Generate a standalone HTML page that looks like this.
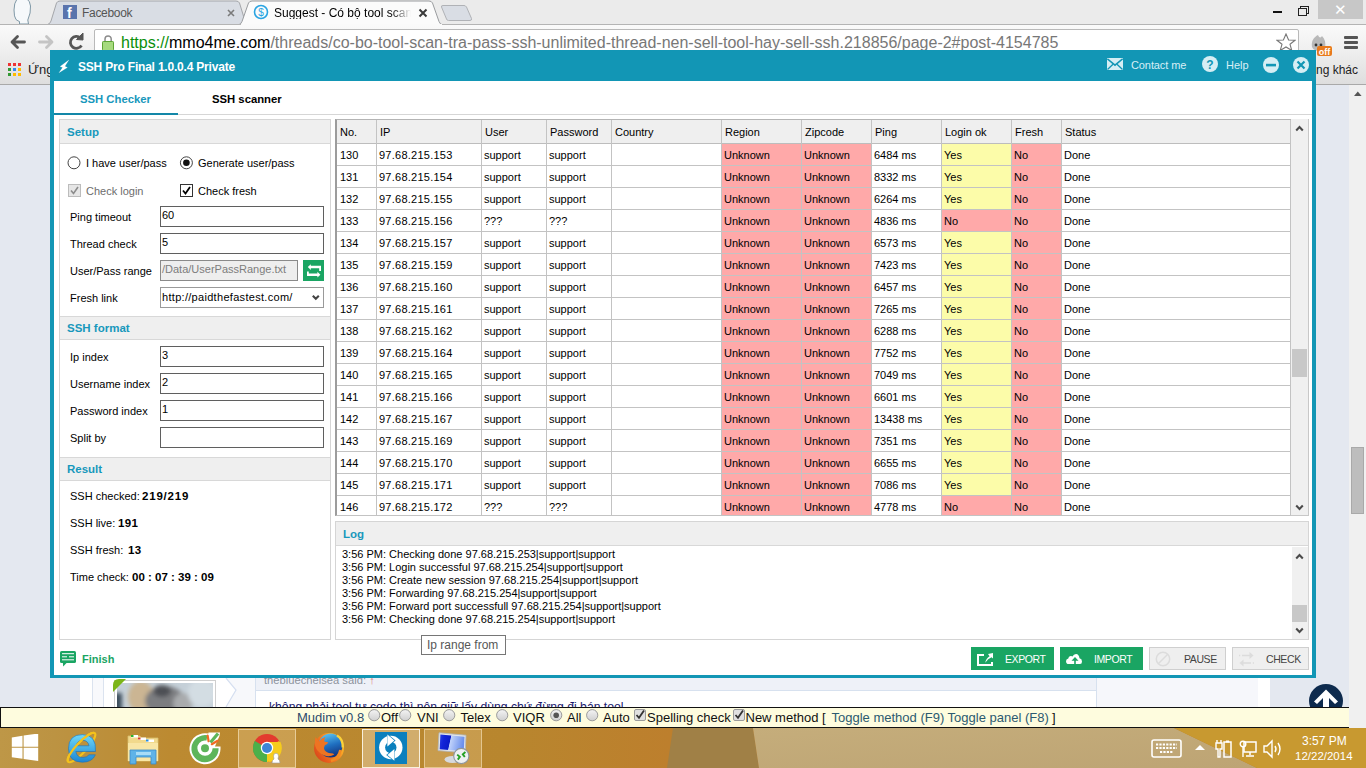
<!DOCTYPE html>
<html><head><meta charset="utf-8"><style>
*{margin:0;padding:0;box-sizing:border-box}
html,body{width:1366px;height:768px;overflow:hidden;position:relative;background:#e4e8f0;font-family:"Liberation Sans",sans-serif;font-size:11px;color:#000}
.a{position:absolute}
.t{position:absolute;white-space:nowrap;line-height:1}
/* chrome */
#tabstrip{left:0;top:0;width:1366px;height:24px;background:#ebebeb}
#toolbar{left:0;top:24px;width:1366px;height:61px;background:linear-gradient(#fafafa,#f0f0f0 40%,#dedede);border-top:1px solid #b4b4b4;border-bottom:1px solid #a9a9a9}
#bookbar{display:none}
#addr{left:94px;top:29px;width:1205px;height:26px;background:#fff;border:1px solid #b9b9b9;border-radius:2px}
/* page */
#pscroll{left:1349px;top:85px;width:17px;height:642px;background:#f0f0f0}
/* app window */
#win{left:50px;top:50px;width:1266px;height:628px;background:#1296b5}
#winin{left:54px;top:81px;width:1258px;height:594px;background:#fff}
.sec{position:absolute;background:#fff;border:1px solid #d5d5d5}
.sech{position:absolute;left:0;top:0;right:0;height:24px;background:#efefef;border-bottom:1px solid #d8d8d8}
.secht{position:absolute;left:7px;top:7px;font-weight:bold;font-size:11.5px;color:#1898bc;line-height:1}
.lbl{position:absolute;white-space:nowrap;line-height:1;font-size:11px}
.inp{position:absolute;background:#fff;border:1px solid #5f5f5f;height:21px}
.inpt{position:absolute;left:1px;top:3px;font-size:11px;line-height:1;white-space:nowrap}
/* table */
#tbl{left:335px;top:119px;width:956px;height:397px;overflow:hidden;border-left:2px solid #9c9c9c;border-top:1px solid #b4b4b4;border-bottom:1px solid #c3c3c3}
.th{position:absolute;background:#efefef;border-bottom:1px solid #bdbdbd}
.tht{position:absolute;top:7px;white-space:nowrap;line-height:1;font-size:11px}
.td{position:absolute;height:22px;border-bottom:1px solid #c3c3c3;padding:6px 0 0 3px;white-space:nowrap;line-height:1;font-size:11px}
.vl{position:absolute;top:0;width:1px;height:400px;background:#c3c3c3}
.btn{position:absolute;height:23px;top:647px}
.btnt{position:absolute;top:7px;font-size:10.5px;line-height:1;white-space:nowrap;letter-spacing:-0.4px}

</style></head><body>
<!-- CHROME FRAME -->
<div class="a" id="tabstrip"></div>
<svg class="a" style="left:0;top:0" width="1366" height="30">
  <path d="M17 -1 Q14 3 14 10 Q14 17 16 19.5 Q18 21 19.5 21.5 L19.5 24 L28.5 24 L27.8 20 Q31 13 30.5 6 Q30 1 27 -1 Z" fill="#f6f9fb" stroke="#7f98a6" stroke-width="1"/>
  <path d="M47.5 24.5 Q50 24 51 21 L56.5 3 Q57.5 1 60 1 L236 1 Q238.5 1 239.5 3 L245 21 Q246 24 248.5 24.5 Z" fill="#d9dde4" stroke="#a4a6aa" stroke-width="1"/>
  <path d="M441.5 7 Q441 5.5 443 5.5 L464 5.5 Q465.5 5.5 466.5 7 L471.5 18.5 Q472 20.5 470 20.5 L448.5 20.5 Q447 20.5 446.5 19 Z" fill="#d9dde4" stroke="#b0b2b6" stroke-width="1"/>
  <path d="M238 25 Q241 24.5 242 21.5 L248.5 3 Q249.5 1 252 1 L429 1 Q431.5 1 432.5 3 L439 21.5 Q440 24.5 443 25 Z" fill="#fbfbfb" stroke="#9a9c9f" stroke-width="1"/>
</svg>
<div class="a" style="left:63px;top:5px;width:14px;height:14px;background:#5a74ad"></div>
<div class="t" style="left:67px;top:6px;font-size:14px;font-weight:bold;color:#fff">f</div>
<div class="t" style="left:82px;top:7px;font-size:12px;color:#555;letter-spacing:-0.3px">Facebook</div>
<svg class="a" style="left:226px;top:8px" width="10" height="10"><path d="M2 2 L8 8 M8 2 L2 8" stroke="#7a7a7a" stroke-width="1.6"/></svg>
<svg class="a" style="left:253px;top:4px" width="16" height="16"><circle cx="8" cy="8" r="6.5" fill="none" stroke="#2aa4e2" stroke-width="1.6"/><text x="8" y="12" font-size="10" text-anchor="middle" fill="#2aa4e2" font-family="Liberation Sans">$</text></svg>
<div class="t" style="left:274px;top:7px;font-size:12px;color:#000;width:137px;overflow:hidden;-webkit-mask-image:linear-gradient(90deg,#000 85%,transparent)">Suggest - Có bộ tool scan, tra</div>
<svg class="a" style="left:418px;top:8px" width="10" height="10"><path d="M1.5 1.5 L8.5 8.5 M8.5 1.5 L1.5 8.5" stroke="#3a3a3a" stroke-width="2"/></svg>
<!-- window controls -->
<div class="a" style="left:1273px;top:11px;width:9px;height:2px;background:#111"></div>
<div class="a" style="left:1300px;top:6px;width:9px;height:8px;border:1.5px solid #222"></div>
<div class="a" style="left:1298px;top:8px;width:9px;height:8px;border:1.5px solid #222;background:#ebebeb"></div>
<div class="a" style="left:1318px;top:0;width:45px;height:19px;background:#c7c7c7"></div>
<div class="t" style="left:1334px;top:2px;font-size:15px;color:#fff">✕</div>

<div class="a" id="toolbar"></div>
<div class="a" style="left:241px;top:24px;width:201px;height:2px;background:#fafafa"></div>
<svg class="a" style="left:0;top:30px" width="95" height="24">
  <path d="M17.5 6.5 L12 12 L17.5 17.5 M12.5 12 L24.5 12" fill="none" stroke="#555" stroke-width="2.8" stroke-linecap="round" stroke-linejoin="round"/>
  <path d="M46.5 6.5 L52 12 L46.5 17.5 M51.5 12 L39.5 12" fill="none" stroke="#c4c4c4" stroke-width="2.8" stroke-linecap="round" stroke-linejoin="round"/>
  <path d="M81.5 15.5 A6 6 0 1 1 80.5 8" fill="none" stroke="#555" stroke-width="2.8"/>
  <path d="M76.5 9.5 L83 3 L83 10 Z" fill="#555" stroke="#555" stroke-width="1" stroke-linejoin="round"/>
</svg>
<div class="a" id="addr"></div>
<svg class="a" style="left:101px;top:34px" width="14" height="17"><path d="M4 7.5 V5 A3.1 3.1 0 0 1 10.2 5 V7.5" fill="none" stroke="#8c8c8c" stroke-width="1.5"/><rect x="1.5" y="7.5" width="11" height="9" rx="0.8" fill="#a6da7e" stroke="#5ea535" stroke-width="1"/></svg>
<div class="t" style="left:121px;top:35px;font-size:16px;color:#777"><span style="color:#0a8f0a">https://</span><span style="color:#000">mmo4me.com</span>/threads/co-bo-tool-scan-tra-pass-ssh-unlimited-thread-nen-sell-tool-hay-sell-ssh.218856/page-2#post-4154785</div>
<svg class="a" style="left:1276px;top:33px" width="20" height="18"><path d="M10 1 L12.6 7 L19 7.3 L14 11.3 L15.8 17.5 L10 14 L4.2 17.5 L6 11.3 L1 7.3 L7.4 7 Z" fill="#fff" stroke="#777" stroke-width="1.1"/></svg>
<svg class="a" style="left:1308px;top:33px" width="28" height="24"><path d="M4 14 C3 8 6 4 10 2 C11 5 13 5 14 3 C17 6 18 10 17 15 C15 19 6 19 4 14 Z" fill="#b9b9b9"/><circle cx="8" cy="12" r="1.4" fill="#333"/><circle cx="13" cy="12" r="1.4" fill="#333"/><rect x="9" y="13" width="15" height="10" rx="2" fill="#e87a1c"/><text x="16.5" y="21.5" font-size="9" font-weight="bold" text-anchor="middle" fill="#fff" font-family="Liberation Sans">off</text></svg>
<div class="a" style="left:1344px;top:36px;width:14px;height:3px;background:#555;border-radius:1px"></div>
<div class="a" style="left:1344px;top:41px;width:14px;height:3px;background:#555;border-radius:1px"></div>
<div class="a" style="left:1344px;top:46px;width:14px;height:3px;background:#555;border-radius:1px"></div>

<div class="a" id="bookbar"></div>
<svg class="a" style="left:8px;top:63px" width="14" height="14">
 <rect x="0" y="0" width="3" height="3" fill="#e33"/><rect x="5" y="0" width="3" height="3" fill="#e33"/><rect x="10" y="0" width="3" height="3" fill="#e33"/>
 <rect x="0" y="5" width="3" height="3" fill="#393"/><rect x="5" y="5" width="3" height="3" fill="#38e"/><rect x="10" y="5" width="3" height="3" fill="#fb0"/>
 <rect x="0" y="10" width="3" height="3" fill="#393"/><rect x="5" y="10" width="3" height="3" fill="#fb0"/><rect x="10" y="10" width="3" height="3" fill="#fb0"/>
</svg>
<div class="t" style="left:28px;top:63px;font-size:13px;color:#222">Ứng</div>
<div class="t" style="left:1316px;top:64px;font-size:12px;color:#222">ng khác</div>

<!-- page -->
<div class="a" id="pscroll"></div>
<svg class="a" style="left:1350px;top:87px" width="16" height="12"><path d="M4 9 L7.8 4.6 L11.6 9 Z" fill="#555"/></svg>
<svg class="a" style="left:1350px;top:713px" width="16" height="12"><path d="M4 4 L7.8 8.4 L11.6 4 Z" fill="#555"/></svg>
<div class="a" style="left:1351px;top:447px;width:13px;height:67px;background:#bdbdbd;border:1px solid #a9a9a9"></div>
<!-- page content below window -->
<div class="a" style="left:80px;top:678px;width:1190px;height:30px;background:#fff"></div>
<div class="a" style="left:92px;top:678px;width:12px;height:30px;background:#f8f9fc;border-left:1px solid #dbe3ef;border-right:1px solid #dbe3ef"></div>
<div class="a" style="left:114px;top:680px;width:102px;height:30px;background:#fff;border:1px solid #cfcfcf"></div>
<svg class="a" style="left:117px;top:683px" width="96" height="25">
<defs><filter id="blr" x="-20%" y="-20%" width="140%" height="140%"><feGaussianBlur stdDeviation="2.2"/></filter></defs>
<rect x="0" y="0" width="96" height="25" fill="#c5d0d8"/>
<g filter="url(#blr)">
<rect x="-4" y="10" width="9" height="20" fill="#3d4d5c"/>
<ellipse cx="24" cy="14" rx="13" ry="16" fill="#cbb593"/>
<ellipse cx="48" cy="18" rx="20" ry="15" fill="#7b7d80"/>
<ellipse cx="45" cy="8" rx="9" ry="6" fill="#4e5055"/>
<ellipse cx="66" cy="20" rx="10" ry="10" fill="#a9abad"/>
<ellipse cx="85" cy="10" rx="14" ry="14" fill="#d3dde3"/>
</g>
</svg>
<svg class="a" style="left:113px;top:679px" width="14" height="14"><path d="M0 13 V6 Q0 0 6 0 H13 Z" fill="#7cb518"/></svg>
<svg class="a" style="left:225px;top:678px" width="31" height="30"><path d="M1 0 L11 12 L1 29 L1 30 L31 30 L31 0 Z" fill="#f7f8fb"/><path d="M1 0 L11 12 L1 29" fill="none" stroke="#d5dff0" stroke-width="1.2"/></svg>
<div class="a" style="left:255px;top:678px;width:842px;height:30px;background:#fff;border-left:1px solid #d7e1ef;border-right:1px solid #d7e1ef"></div>
<div class="a" style="left:256px;top:678px;width:840px;height:13px;background:#eef1f8;border-bottom:1px solid #d7e1ef"></div>
<div class="t" style="left:264px;top:675px;font-size:11.2px;color:#8c929c">thebluechelsea said: <span style="color:#d77">↑</span></div>
<div class="t" style="left:269px;top:701px;font-size:12.2px;color:#1a1a6e">không phải tool tự code thì nên giữ lấy dùng chứ đừng đi bán tool</div>
<div class="a" style="left:1097px;top:678px;width:161px;height:30px;background:#f6f7fb"></div>
<div class="a" style="left:1258px;top:678px;width:12px;height:30px;background:#fff"></div>
<div class="a" style="left:1309px;top:684px;width:34px;height:34px;border-radius:50%;background:#0e2b4e"></div>
<svg class="a" style="left:1309px;top:684px" width="34" height="24"><path d="M17 5.5 L29 17.5 L26 20 L20 14 V24 H14 V14 L8 20 L5 17.5 Z" fill="#fff"/></svg>

<!-- APP WINDOW -->
<div class="a" id="win"></div>
<div class="a" id="winin"></div>
<svg class="a" style="left:54px;top:56px" width="20" height="20"><path d="M14.8 4.1 L10.9 10.3 L13.4 11.5 L5 16.7 L8.6 11.6 L6.1 10.5 Z" fill="#fff" stroke="#fff" stroke-width="0.2"/></svg>
<div class="t" style="left:78px;top:61px;font-size:12px;font-weight:bold;color:#fff;letter-spacing:-0.2px">SSH Pro Final 1.0.0.4 Private</div>
<svg class="a" style="left:1107px;top:58px" width="16" height="13"><rect x="0" y="0" width="16" height="12" fill="#d6eef4"/><path d="M0.3 0.8 L8 7.2 L15.7 0.8" fill="none" stroke="#1296b5" stroke-width="1.6"/><path d="M0.5 11.5 L6 6.3 M15.5 11.5 L10 6.3" stroke="#1296b5" stroke-width="1.3"/></svg>
<div class="t" style="left:1131px;top:60px;font-size:11px;color:#d8eff5;letter-spacing:-0.1px">Contact me</div>
<svg class="a" style="left:1201px;top:55px" width="18" height="18"><circle cx="9" cy="9" r="8" fill="#d6eef4"/><text x="9" y="13.5" font-size="12" font-weight="bold" text-anchor="middle" fill="#1296b5" font-family="Liberation Sans">?</text></svg>
<div class="t" style="left:1226px;top:60px;font-size:11px;color:#d8eff5">Help</div>
<svg class="a" style="left:1262px;top:56px" width="18" height="18"><circle cx="9" cy="9" r="8" fill="#d6eef4"/><rect x="4" y="7.8" width="10" height="2.6" fill="#1296b5"/></svg>
<svg class="a" style="left:1292px;top:56px" width="18" height="18"><circle cx="9" cy="9" r="8" fill="#d6eef4"/><path d="M5.5 5.5 L12.5 12.5 M12.5 5.5 L5.5 12.5" stroke="#1296b5" stroke-width="2.2"/></svg>

<!-- tabs -->
<div class="a" style="left:54px;top:114px;width:1258px;height:1px;background:#d6d6d6"></div>
<div class="a" style="left:54px;top:113px;width:124px;height:2px;background:#1387a8"></div>
<div class="t" style="left:80px;top:94px;font-size:11.3px;font-weight:bold;color:#1898bc">SSH Checker</div>
<div class="t" style="left:212px;top:94px;font-size:11.3px;font-weight:bold;color:#000">SSH scanner</div>

<!-- left panel -->
<div class="sec" style="left:59px;top:119px;width:272px;height:521px"></div>
<div class="a" style="left:60px;top:120px;width:270px;height:24px;background:#efefef;border-bottom:1px solid #d8d8d8"></div>
<div class="t" style="left:67px;top:127px;font-size:11.5px;font-weight:bold;color:#1898bc">Setup</div>
<svg class="a" style="left:67px;top:156px" width="130" height="14"><circle cx="7" cy="6.8" r="6" fill="#fff" stroke="#444" stroke-width="1"/><circle cx="119.4" cy="6.8" r="6" fill="#fff" stroke="#444" stroke-width="1"/><circle cx="119.4" cy="6.8" r="3.3" fill="#111"/></svg>
<div class="lbl" style="left:86px;top:158px">I have user/pass</div>
<div class="lbl" style="left:198px;top:158px">Generate user/pass</div>
<svg class="a" style="left:68px;top:184px" width="130" height="14"><rect x="0.5" y="0.5" width="12" height="12" fill="#e6e6e6" stroke="#bcbcbc"/><path d="M3 6.5 L5.5 9.5 L10 3" fill="none" stroke="#8c8c8c" stroke-width="1.6"/><rect x="112.5" y="0.5" width="12" height="12" fill="#fff" stroke="#333"/><path d="M115 6.5 L117.5 9.5 L122 3" fill="none" stroke="#000" stroke-width="1.8"/></svg>
<div class="lbl" style="left:86px;top:186px;color:#6d6d6d">Check login</div>
<div class="lbl" style="left:198px;top:186px">Check fresh</div>
<div class="lbl" style="left:70px;top:212px">Ping timeout</div>
<div class="inp" style="left:160px;top:206px;width:164px"><div class="inpt">60</div></div>
<div class="lbl" style="left:70px;top:239px">Thread check</div>
<div class="inp" style="left:160px;top:233px;width:164px"><div class="inpt">5</div></div>
<div class="lbl" style="left:70px;top:266px">User/Pass range</div>
<div class="inp" style="left:160px;top:260px;width:138px;background:#eeeeee;border-color:#8a8a8a"><div class="inpt" style="color:#7d7d7d">/Data/UserPassRange.txt</div></div>
<div class="a" style="left:303px;top:260px;width:21px;height:21px;background:#1aa563"></div>
<svg class="a" style="left:303px;top:260px" width="21" height="21"><path d="M4.8 7.1 L7.8 4.2 V5.8 H18 V11 H16.2 V8.3 H7.8 V10 Z" fill="#fff"/><path d="M17.2 14.6 L14.2 11.7 V13.4 H4 V11.4 H5.8 V11.4 Z" fill="none"/><path d="M17.4 14.7 L14.4 17.6 V16 H4 V11.4 H5.8 V13.5 H14.4 V11.8 Z" fill="#fff"/></svg>
<div class="lbl" style="left:70px;top:293px">Fresh link</div>
<div class="inp" style="left:160px;top:287px;width:164px;border-color:#9a9a9a"><div class="inpt" style="top:4px;letter-spacing:0.3px">http://paidthefastest.com/</div></div>
<svg class="a" style="left:311px;top:293px" width="10" height="9"><path d="M1.8 2.8 L4.8 5.8 L7.8 2.8" fill="none" stroke="#444" stroke-width="2.1"/></svg>

<div class="a" style="left:60px;top:316px;width:270px;height:24px;background:#efefef;border-top:1px solid #d8d8d8;border-bottom:1px solid #d8d8d8"></div>
<div class="t" style="left:67px;top:323px;font-size:11.5px;font-weight:bold;color:#1898bc">SSH format</div>
<div class="lbl" style="left:70px;top:352px">Ip index</div>
<div class="inp" style="left:160px;top:346px;width:164px"><div class="inpt">3</div></div>
<div class="lbl" style="left:70px;top:379px">Username index</div>
<div class="inp" style="left:160px;top:373px;width:164px"><div class="inpt">2</div></div>
<div class="lbl" style="left:70px;top:406px">Password index</div>
<div class="inp" style="left:160px;top:400px;width:164px"><div class="inpt">1</div></div>
<div class="lbl" style="left:70px;top:433px">Split by</div>
<div class="inp" style="left:160px;top:427px;width:164px"></div>

<div class="a" style="left:60px;top:457px;width:270px;height:24px;background:#efefef;border-top:1px solid #d8d8d8;border-bottom:1px solid #d8d8d8"></div>
<div class="t" style="left:67px;top:464px;font-size:11.5px;font-weight:bold;color:#1898bc">Result</div>
<div class="lbl" style="left:70px;top:491px">SSH checked:</div><b class="lbl" style="left:142px;top:491px;font-size:11.5px;letter-spacing:0.8px">219/219</b>
<div class="lbl" style="left:70px;top:518px">SSH live:</div><b class="lbl" style="left:118px;top:518px;font-size:11.5px;letter-spacing:0.3px">191</b>
<div class="lbl" style="left:70px;top:545px">SSH fresh:</div><b class="lbl" style="left:128px;top:545px;font-size:11.5px;letter-spacing:0.3px">13</b>
<div class="lbl" style="left:70px;top:572px">Time check:</div><b class="lbl" style="left:132px;top:572px;font-size:11.5px">00 : 07 : 39 : 09</b>

<svg class="a" style="left:60px;top:651px" width="17" height="17"><rect x="0" y="0" width="16" height="12" rx="1.6" fill="#1aa563"/><path d="M2.8 11 L3.2 15.5 L7.5 11 Z" fill="#1aa563"/><path d="M2 2.7 H14 M2 5.8 H7 M9 5.8 H14 M2 8.8 H14" stroke="#fff" stroke-width="1"/></svg>
<div class="t" style="left:82px;top:654px;font-size:11px;font-weight:bold;color:#1aa563">Finish</div>

<!-- table -->
<div class="a" id="tbl"><div class="th" style="left:0;top:0;width:953px;height:24px"></div>
<div class="tht" style="left:3px">No.</div>
<div class="tht" style="left:43px">IP</div>
<div class="tht" style="left:148px">User</div>
<div class="tht" style="left:213px">Password</div>
<div class="tht" style="left:278px">Country</div>
<div class="tht" style="left:388px">Region</div>
<div class="tht" style="left:468px">Zipcode</div>
<div class="tht" style="left:538px">Ping</div>
<div class="tht" style="left:608px">Login ok</div>
<div class="tht" style="left:678px">Fresh</div>
<div class="tht" style="left:728px">Status</div>
<div class="td" style="left:-1px;top:24px;width:40px;padding-left:4px">130</div>
<div class="td" style="left:39px;top:24px;width:105px;letter-spacing:0.25px">97.68.215.153</div>
<div class="td" style="left:144px;top:24px;width:65px">support</div>
<div class="td" style="left:209px;top:24px;width:65px">support</div>
<div class="td" style="left:274px;top:24px;width:110px"></div>
<div class="td" style="left:384px;top:24px;width:80px;background:#ffa9a9">Unknown</div>
<div class="td" style="left:464px;top:24px;width:70px;background:#ffa9a9">Unknown</div>
<div class="td" style="left:534px;top:24px;width:70px">6484 ms</div>
<div class="td" style="left:604px;top:24px;width:70px;background:#fcfca9">Yes</div>
<div class="td" style="left:674px;top:24px;width:50px;background:#ffa9a9">No</div>
<div class="td" style="left:724px;top:24px;width:229px">Done</div>
<div class="td" style="left:-1px;top:46px;width:40px;padding-left:4px">131</div>
<div class="td" style="left:39px;top:46px;width:105px;letter-spacing:0.25px">97.68.215.154</div>
<div class="td" style="left:144px;top:46px;width:65px">support</div>
<div class="td" style="left:209px;top:46px;width:65px">support</div>
<div class="td" style="left:274px;top:46px;width:110px"></div>
<div class="td" style="left:384px;top:46px;width:80px;background:#ffa9a9">Unknown</div>
<div class="td" style="left:464px;top:46px;width:70px;background:#ffa9a9">Unknown</div>
<div class="td" style="left:534px;top:46px;width:70px">8332 ms</div>
<div class="td" style="left:604px;top:46px;width:70px;background:#fcfca9">Yes</div>
<div class="td" style="left:674px;top:46px;width:50px;background:#ffa9a9">No</div>
<div class="td" style="left:724px;top:46px;width:229px">Done</div>
<div class="td" style="left:-1px;top:68px;width:40px;padding-left:4px">132</div>
<div class="td" style="left:39px;top:68px;width:105px;letter-spacing:0.25px">97.68.215.155</div>
<div class="td" style="left:144px;top:68px;width:65px">support</div>
<div class="td" style="left:209px;top:68px;width:65px">support</div>
<div class="td" style="left:274px;top:68px;width:110px"></div>
<div class="td" style="left:384px;top:68px;width:80px;background:#ffa9a9">Unknown</div>
<div class="td" style="left:464px;top:68px;width:70px;background:#ffa9a9">Unknown</div>
<div class="td" style="left:534px;top:68px;width:70px">6264 ms</div>
<div class="td" style="left:604px;top:68px;width:70px;background:#fcfca9">Yes</div>
<div class="td" style="left:674px;top:68px;width:50px;background:#ffa9a9">No</div>
<div class="td" style="left:724px;top:68px;width:229px">Done</div>
<div class="td" style="left:-1px;top:90px;width:40px;padding-left:4px">133</div>
<div class="td" style="left:39px;top:90px;width:105px;letter-spacing:0.25px">97.68.215.156</div>
<div class="td" style="left:144px;top:90px;width:65px">???</div>
<div class="td" style="left:209px;top:90px;width:65px">???</div>
<div class="td" style="left:274px;top:90px;width:110px"></div>
<div class="td" style="left:384px;top:90px;width:80px;background:#ffa9a9">Unknown</div>
<div class="td" style="left:464px;top:90px;width:70px;background:#ffa9a9">Unknown</div>
<div class="td" style="left:534px;top:90px;width:70px">4836 ms</div>
<div class="td" style="left:604px;top:90px;width:70px;background:#ffa9a9">No</div>
<div class="td" style="left:674px;top:90px;width:50px;background:#ffa9a9">No</div>
<div class="td" style="left:724px;top:90px;width:229px">Done</div>
<div class="td" style="left:-1px;top:112px;width:40px;padding-left:4px">134</div>
<div class="td" style="left:39px;top:112px;width:105px;letter-spacing:0.25px">97.68.215.157</div>
<div class="td" style="left:144px;top:112px;width:65px">support</div>
<div class="td" style="left:209px;top:112px;width:65px">support</div>
<div class="td" style="left:274px;top:112px;width:110px"></div>
<div class="td" style="left:384px;top:112px;width:80px;background:#ffa9a9">Unknown</div>
<div class="td" style="left:464px;top:112px;width:70px;background:#ffa9a9">Unknown</div>
<div class="td" style="left:534px;top:112px;width:70px">6573 ms</div>
<div class="td" style="left:604px;top:112px;width:70px;background:#fcfca9">Yes</div>
<div class="td" style="left:674px;top:112px;width:50px;background:#ffa9a9">No</div>
<div class="td" style="left:724px;top:112px;width:229px">Done</div>
<div class="td" style="left:-1px;top:134px;width:40px;padding-left:4px">135</div>
<div class="td" style="left:39px;top:134px;width:105px;letter-spacing:0.25px">97.68.215.159</div>
<div class="td" style="left:144px;top:134px;width:65px">support</div>
<div class="td" style="left:209px;top:134px;width:65px">support</div>
<div class="td" style="left:274px;top:134px;width:110px"></div>
<div class="td" style="left:384px;top:134px;width:80px;background:#ffa9a9">Unknown</div>
<div class="td" style="left:464px;top:134px;width:70px;background:#ffa9a9">Unknown</div>
<div class="td" style="left:534px;top:134px;width:70px">7423 ms</div>
<div class="td" style="left:604px;top:134px;width:70px;background:#fcfca9">Yes</div>
<div class="td" style="left:674px;top:134px;width:50px;background:#ffa9a9">No</div>
<div class="td" style="left:724px;top:134px;width:229px">Done</div>
<div class="td" style="left:-1px;top:156px;width:40px;padding-left:4px">136</div>
<div class="td" style="left:39px;top:156px;width:105px;letter-spacing:0.25px">97.68.215.160</div>
<div class="td" style="left:144px;top:156px;width:65px">support</div>
<div class="td" style="left:209px;top:156px;width:65px">support</div>
<div class="td" style="left:274px;top:156px;width:110px"></div>
<div class="td" style="left:384px;top:156px;width:80px;background:#ffa9a9">Unknown</div>
<div class="td" style="left:464px;top:156px;width:70px;background:#ffa9a9">Unknown</div>
<div class="td" style="left:534px;top:156px;width:70px">6457 ms</div>
<div class="td" style="left:604px;top:156px;width:70px;background:#fcfca9">Yes</div>
<div class="td" style="left:674px;top:156px;width:50px;background:#ffa9a9">No</div>
<div class="td" style="left:724px;top:156px;width:229px">Done</div>
<div class="td" style="left:-1px;top:178px;width:40px;padding-left:4px">137</div>
<div class="td" style="left:39px;top:178px;width:105px;letter-spacing:0.25px">97.68.215.161</div>
<div class="td" style="left:144px;top:178px;width:65px">support</div>
<div class="td" style="left:209px;top:178px;width:65px">support</div>
<div class="td" style="left:274px;top:178px;width:110px"></div>
<div class="td" style="left:384px;top:178px;width:80px;background:#ffa9a9">Unknown</div>
<div class="td" style="left:464px;top:178px;width:70px;background:#ffa9a9">Unknown</div>
<div class="td" style="left:534px;top:178px;width:70px">7265 ms</div>
<div class="td" style="left:604px;top:178px;width:70px;background:#fcfca9">Yes</div>
<div class="td" style="left:674px;top:178px;width:50px;background:#ffa9a9">No</div>
<div class="td" style="left:724px;top:178px;width:229px">Done</div>
<div class="td" style="left:-1px;top:200px;width:40px;padding-left:4px">138</div>
<div class="td" style="left:39px;top:200px;width:105px;letter-spacing:0.25px">97.68.215.162</div>
<div class="td" style="left:144px;top:200px;width:65px">support</div>
<div class="td" style="left:209px;top:200px;width:65px">support</div>
<div class="td" style="left:274px;top:200px;width:110px"></div>
<div class="td" style="left:384px;top:200px;width:80px;background:#ffa9a9">Unknown</div>
<div class="td" style="left:464px;top:200px;width:70px;background:#ffa9a9">Unknown</div>
<div class="td" style="left:534px;top:200px;width:70px">6288 ms</div>
<div class="td" style="left:604px;top:200px;width:70px;background:#fcfca9">Yes</div>
<div class="td" style="left:674px;top:200px;width:50px;background:#ffa9a9">No</div>
<div class="td" style="left:724px;top:200px;width:229px">Done</div>
<div class="td" style="left:-1px;top:222px;width:40px;padding-left:4px">139</div>
<div class="td" style="left:39px;top:222px;width:105px;letter-spacing:0.25px">97.68.215.164</div>
<div class="td" style="left:144px;top:222px;width:65px">support</div>
<div class="td" style="left:209px;top:222px;width:65px">support</div>
<div class="td" style="left:274px;top:222px;width:110px"></div>
<div class="td" style="left:384px;top:222px;width:80px;background:#ffa9a9">Unknown</div>
<div class="td" style="left:464px;top:222px;width:70px;background:#ffa9a9">Unknown</div>
<div class="td" style="left:534px;top:222px;width:70px">7752 ms</div>
<div class="td" style="left:604px;top:222px;width:70px;background:#fcfca9">Yes</div>
<div class="td" style="left:674px;top:222px;width:50px;background:#ffa9a9">No</div>
<div class="td" style="left:724px;top:222px;width:229px">Done</div>
<div class="td" style="left:-1px;top:244px;width:40px;padding-left:4px">140</div>
<div class="td" style="left:39px;top:244px;width:105px;letter-spacing:0.25px">97.68.215.165</div>
<div class="td" style="left:144px;top:244px;width:65px">support</div>
<div class="td" style="left:209px;top:244px;width:65px">support</div>
<div class="td" style="left:274px;top:244px;width:110px"></div>
<div class="td" style="left:384px;top:244px;width:80px;background:#ffa9a9">Unknown</div>
<div class="td" style="left:464px;top:244px;width:70px;background:#ffa9a9">Unknown</div>
<div class="td" style="left:534px;top:244px;width:70px">7049 ms</div>
<div class="td" style="left:604px;top:244px;width:70px;background:#fcfca9">Yes</div>
<div class="td" style="left:674px;top:244px;width:50px;background:#ffa9a9">No</div>
<div class="td" style="left:724px;top:244px;width:229px">Done</div>
<div class="td" style="left:-1px;top:266px;width:40px;padding-left:4px">141</div>
<div class="td" style="left:39px;top:266px;width:105px;letter-spacing:0.25px">97.68.215.166</div>
<div class="td" style="left:144px;top:266px;width:65px">support</div>
<div class="td" style="left:209px;top:266px;width:65px">support</div>
<div class="td" style="left:274px;top:266px;width:110px"></div>
<div class="td" style="left:384px;top:266px;width:80px;background:#ffa9a9">Unknown</div>
<div class="td" style="left:464px;top:266px;width:70px;background:#ffa9a9">Unknown</div>
<div class="td" style="left:534px;top:266px;width:70px">6601 ms</div>
<div class="td" style="left:604px;top:266px;width:70px;background:#fcfca9">Yes</div>
<div class="td" style="left:674px;top:266px;width:50px;background:#ffa9a9">No</div>
<div class="td" style="left:724px;top:266px;width:229px">Done</div>
<div class="td" style="left:-1px;top:288px;width:40px;padding-left:4px">142</div>
<div class="td" style="left:39px;top:288px;width:105px;letter-spacing:0.25px">97.68.215.167</div>
<div class="td" style="left:144px;top:288px;width:65px">support</div>
<div class="td" style="left:209px;top:288px;width:65px">support</div>
<div class="td" style="left:274px;top:288px;width:110px"></div>
<div class="td" style="left:384px;top:288px;width:80px;background:#ffa9a9">Unknown</div>
<div class="td" style="left:464px;top:288px;width:70px;background:#ffa9a9">Unknown</div>
<div class="td" style="left:534px;top:288px;width:70px">13438 ms</div>
<div class="td" style="left:604px;top:288px;width:70px;background:#fcfca9">Yes</div>
<div class="td" style="left:674px;top:288px;width:50px;background:#ffa9a9">No</div>
<div class="td" style="left:724px;top:288px;width:229px">Done</div>
<div class="td" style="left:-1px;top:310px;width:40px;padding-left:4px">143</div>
<div class="td" style="left:39px;top:310px;width:105px;letter-spacing:0.25px">97.68.215.169</div>
<div class="td" style="left:144px;top:310px;width:65px">support</div>
<div class="td" style="left:209px;top:310px;width:65px">support</div>
<div class="td" style="left:274px;top:310px;width:110px"></div>
<div class="td" style="left:384px;top:310px;width:80px;background:#ffa9a9">Unknown</div>
<div class="td" style="left:464px;top:310px;width:70px;background:#ffa9a9">Unknown</div>
<div class="td" style="left:534px;top:310px;width:70px">7351 ms</div>
<div class="td" style="left:604px;top:310px;width:70px;background:#fcfca9">Yes</div>
<div class="td" style="left:674px;top:310px;width:50px;background:#ffa9a9">No</div>
<div class="td" style="left:724px;top:310px;width:229px">Done</div>
<div class="td" style="left:-1px;top:332px;width:40px;padding-left:4px">144</div>
<div class="td" style="left:39px;top:332px;width:105px;letter-spacing:0.25px">97.68.215.170</div>
<div class="td" style="left:144px;top:332px;width:65px">support</div>
<div class="td" style="left:209px;top:332px;width:65px">support</div>
<div class="td" style="left:274px;top:332px;width:110px"></div>
<div class="td" style="left:384px;top:332px;width:80px;background:#ffa9a9">Unknown</div>
<div class="td" style="left:464px;top:332px;width:70px;background:#ffa9a9">Unknown</div>
<div class="td" style="left:534px;top:332px;width:70px">6655 ms</div>
<div class="td" style="left:604px;top:332px;width:70px;background:#fcfca9">Yes</div>
<div class="td" style="left:674px;top:332px;width:50px;background:#ffa9a9">No</div>
<div class="td" style="left:724px;top:332px;width:229px">Done</div>
<div class="td" style="left:-1px;top:354px;width:40px;padding-left:4px">145</div>
<div class="td" style="left:39px;top:354px;width:105px;letter-spacing:0.25px">97.68.215.171</div>
<div class="td" style="left:144px;top:354px;width:65px">support</div>
<div class="td" style="left:209px;top:354px;width:65px">support</div>
<div class="td" style="left:274px;top:354px;width:110px"></div>
<div class="td" style="left:384px;top:354px;width:80px;background:#ffa9a9">Unknown</div>
<div class="td" style="left:464px;top:354px;width:70px;background:#ffa9a9">Unknown</div>
<div class="td" style="left:534px;top:354px;width:70px">7086 ms</div>
<div class="td" style="left:604px;top:354px;width:70px;background:#fcfca9">Yes</div>
<div class="td" style="left:674px;top:354px;width:50px;background:#ffa9a9">No</div>
<div class="td" style="left:724px;top:354px;width:229px">Done</div>
<div class="td" style="left:-1px;top:376px;width:40px;padding-left:4px">146</div>
<div class="td" style="left:39px;top:376px;width:105px;letter-spacing:0.25px">97.68.215.172</div>
<div class="td" style="left:144px;top:376px;width:65px">???</div>
<div class="td" style="left:209px;top:376px;width:65px">???</div>
<div class="td" style="left:274px;top:376px;width:110px"></div>
<div class="td" style="left:384px;top:376px;width:80px;background:#ffa9a9">Unknown</div>
<div class="td" style="left:464px;top:376px;width:70px;background:#ffa9a9">Unknown</div>
<div class="td" style="left:534px;top:376px;width:70px">4778 ms</div>
<div class="td" style="left:604px;top:376px;width:70px;background:#ffa9a9">No</div>
<div class="td" style="left:674px;top:376px;width:50px;background:#ffa9a9">No</div>
<div class="td" style="left:724px;top:376px;width:229px">Done</div>
<div class="vl" style="left:39px"></div>
<div class="vl" style="left:144px"></div>
<div class="vl" style="left:209px"></div>
<div class="vl" style="left:274px"></div>
<div class="vl" style="left:384px"></div>
<div class="vl" style="left:464px"></div>
<div class="vl" style="left:534px"></div>
<div class="vl" style="left:604px"></div>
<div class="vl" style="left:674px"></div>
<div class="vl" style="left:724px"></div>
<div class="vl" style="left:953px"></div></div>
<div class="a" style="left:1291px;top:119px;width:18px;height:397px;background:#f0f0f0;border-right:1px solid #c8c8c8;border-bottom:1px solid #c8c8c8"></div>
<svg class="a" style="left:1293px;top:122px" width="13" height="12"><path d="M3.2 8.4 L6.5 5.1 L9.8 8.4" fill="none" stroke="#4a4a4a" stroke-width="2.1"/></svg>
<svg class="a" style="left:1293px;top:501px" width="13" height="12"><path d="M3.2 4.6 L6.5 7.9 L9.8 4.6" fill="none" stroke="#4a4a4a" stroke-width="2.1"/></svg>
<div class="a" style="left:1292px;top:349px;width:15px;height:28px;background:#c8c8c8"></div>

<!-- log -->
<div class="sec" style="left:335px;top:521px;width:974px;height:119px"></div>
<div class="a" style="left:336px;top:522px;width:972px;height:24px;background:#efefef;border-bottom:1px solid #d8d8d8"></div>
<div class="t" style="left:343px;top:529px;font-size:11.5px;font-weight:bold;color:#1898bc">Log</div>
<div class="a" style="left:342px;top:548px;line-height:13px;font-size:11px;white-space:pre">3:56 PM: Checking done 97.68.215.253|support|support
3:56 PM: Login successful 97.68.215.254|support|support
3:56 PM: Create new session 97.68.215.254|support|support
3:56 PM: Forwarding 97.68.215.254|support|support
3:56 PM: Forward port successfull 97.68.215.254|support|support
3:56 PM: Checking done 97.68.215.254|support|support</div>
<div class="a" style="left:1292px;top:547px;width:16px;height:92px;background:#f0f0f0"></div>
<svg class="a" style="left:1293px;top:550px" width="13" height="12"><path d="M3.2 8.4 L6.5 5.1 L9.8 8.4" fill="none" stroke="#4a4a4a" stroke-width="2.1"/></svg>
<svg class="a" style="left:1293px;top:624px" width="13" height="12"><path d="M3.2 4.6 L6.5 7.9 L9.8 4.6" fill="none" stroke="#4a4a4a" stroke-width="2.1"/></svg>
<div class="a" style="left:1292px;top:605px;width:15px;height:17px;background:#c8c8c8"></div>

<!-- tooltip -->
<div class="a" style="left:421px;top:635px;width:85px;height:20px;background:#fff;border:1px solid #767676"></div>
<div class="t" style="left:427px;top:639px;font-size:12px;color:#575757">Ip range from</div>

<!-- buttons -->
<div class="btn" style="left:971px;width:83px;background:#1aa563"></div>
<svg class="a" style="left:977px;top:653px" width="17" height="14"><path d="M0 1 H7 V3 H2 V11 H14 V9 H16 V13 H0 Z" fill="#fff"/><path d="M8.2 9.8 Q9 5.5 12.6 3.3 L11 1 L16 0 L16 5.5 L14.5 4.3 Q11 5.5 8.2 9.8 Z" fill="#fff"/></svg>
<div class="btnt" style="left:1005px;top:654px;color:#fff">EXPORT</div>
<div class="btn" style="left:1060px;width:83px;background:#1aa563"></div>
<svg class="a" style="left:1066px;top:654px" width="17" height="11"><path d="M1.5 10 Q0 9.5 0 7.3 Q0 5 2.3 4.6 Q2.5 1.8 5 2 Q6 2.2 6.5 2.6 Q7.5 0 10 0 Q13 0.2 13.5 4.3 Q16 4.8 16 7.5 Q16 10 14 10 Z" fill="#fff"/><path d="M9 3 L5.5 6.7 H8.2 V10.5 H9.8 V6.7 H12.5 Z" fill="#1aa563"/></svg>
<div class="btnt" style="left:1094px;top:654px;color:#fff">IMPORT</div>
<div class="btn" style="left:1149px;width:77px;background:#efefef;border:1px solid #cfcfcf"></div>
<svg class="a" style="left:1155px;top:651px" width="16" height="16"><circle cx="8" cy="8" r="6.7" fill="none" stroke="#dcdcdc" stroke-width="1.5"/><path d="M3.5 12.5 L12.5 3.5" stroke="#dcdcdc" stroke-width="1.5"/></svg>
<div class="btnt" style="left:1184px;top:654px;color:#444">PAUSE</div>
<div class="btn" style="left:1232px;width:77px;background:#efefef;border:1px solid #cfcfcf"></div>
<svg class="a" style="left:1238px;top:651px" width="18" height="16"><path d="M1 4.5 H2.2 M4 4.5 H12" stroke="#dcdcdc" stroke-width="1.6"/><path d="M11.5 1 L15.5 4.5 L11.5 8 Z" fill="#dcdcdc"/><path d="M16 12 H14.8 M13 12 H5" stroke="#dcdcdc" stroke-width="1.6"/><path d="M5.5 8.5 L1.5 12 L5.5 15.5 Z" fill="#dcdcdc"/></svg>
<div class="btnt" style="left:1266px;top:654px;color:#444">CHECK</div>

<!-- MUDIM BAR -->
<div class="a" style="left:0;top:707px;width:1349px;height:21px;background:#fefcde;border-top:1.5px solid #111;border-bottom:1.5px solid #111;border-left:1.5px solid #111"></div>
<div class="t" style="left:297px;top:711px;font-size:13px;color:#2d4a6b">Mudim v0.8</div>
<svg class="a" style="left:368px;top:709px" width="13" height="13"><defs><linearGradient id="rg" x1="0" y1="0" x2="0" y2="1"><stop offset="0" stop-color="#f4f4f4"/><stop offset="1" stop-color="#cfcfcf"/></linearGradient></defs><circle cx="6.2" cy="6.2" r="5.6" fill="url(#rg)" stroke="#9b9b9b" stroke-width="1"/></svg>
<div class="t" style="left:381px;top:711px;font-size:13px;color:#111">Off</div>
<svg class="a" style="left:399px;top:709px" width="13" height="13"><circle cx="6.2" cy="6.2" r="5.6" fill="url(#rg)" stroke="#9b9b9b" stroke-width="1"/></svg>
<div class="t" style="left:417px;top:711px;font-size:13px;color:#111">VNI</div>
<svg class="a" style="left:443px;top:709px" width="13" height="13"><circle cx="6.2" cy="6.2" r="5.6" fill="url(#rg)" stroke="#9b9b9b" stroke-width="1"/></svg>
<div class="t" style="left:460.5px;top:711px;font-size:13px;color:#111">Telex</div>
<svg class="a" style="left:495.5px;top:709px" width="13" height="13"><circle cx="6.2" cy="6.2" r="5.6" fill="url(#rg)" stroke="#9b9b9b" stroke-width="1"/></svg>
<div class="t" style="left:513px;top:711px;font-size:13px;color:#111">VIQR</div>
<svg class="a" style="left:550px;top:709px" width="13" height="13"><circle cx="6.2" cy="6.2" r="5.6" fill="url(#rg)" stroke="#9b9b9b" stroke-width="1"/><circle cx="6.2" cy="6.2" r="2.8" fill="#555"/></svg>
<div class="t" style="left:567px;top:711px;font-size:13px;color:#111">All</div>
<svg class="a" style="left:586px;top:709px" width="13" height="13"><circle cx="6.2" cy="6.2" r="5.6" fill="url(#rg)" stroke="#9b9b9b" stroke-width="1"/></svg>
<div class="t" style="left:603px;top:711px;font-size:13px;color:#111">Auto</div>
<svg class="a" style="left:634px;top:709px" width="13" height="13"><rect x="0.5" y="0.5" width="11" height="11" rx="1.5" fill="#e0e0e0" stroke="#9b9b9b"/><path d="M2.5 6 L5 8.8 L10 1.5" fill="none" stroke="#333" stroke-width="1.8"/></svg>
<div class="t" style="left:647px;top:711px;font-size:13px;color:#111">Spelling check</div>
<svg class="a" style="left:733px;top:709px" width="13" height="13"><rect x="0.5" y="0.5" width="11" height="11" rx="1.5" fill="#e0e0e0" stroke="#9b9b9b"/><path d="M2.5 6 L5 8.8 L10 1.5" fill="none" stroke="#333" stroke-width="1.8"/></svg>
<div class="t" style="left:745.5px;top:711px;font-size:13px;color:#111">New method [</div>
<div class="t" style="left:831.5px;top:711px;font-size:13px;color:#2c5a70">Toggle method (F9) Toggle panel (F8)</div>
<div class="t" style="left:1052px;top:711px;font-size:13px;color:#111">]</div>
<div class="a" style="left:1349px;top:706px;width:17px;height:22px;background:#f0f0f0"></div>


<!-- TASKBAR -->
<svg class="a" style="left:0;top:728px" width="1366" height="40">
<defs><linearGradient id="tbo" x1="0" y1="0" x2="1" y2="0"><stop offset="0" stop-color="#be9747"/><stop offset="0.04" stop-color="#bc9342"/><stop offset="0.125" stop-color="#bc8a31"/><stop offset="0.37" stop-color="#b8862e"/><stop offset="0.49" stop-color="#bd7f2d"/><stop offset="1" stop-color="#bd7f2d"/></linearGradient>
<linearGradient id="tbb" x1="0" y1="0" x2="1" y2="1"><stop offset="0" stop-color="#c5ad7b"/><stop offset="1" stop-color="#bda474"/></linearGradient></defs>
<rect x="0" y="0" width="1366" height="40" fill="url(#tbo)"/>
<path d="M673 0 L753 0 L759 40 L667 40 Z" fill="#a08046"/>
<path d="M753 0 L1174 0 L1257 40 L759 40 Z" fill="url(#tbb)"/>
<path d="M1174 0 L1366 0 L1366 40 L1257 40 Z" fill="#c89930"/>
</svg>
<svg class="a" style="left:11px;top:734px" width="28" height="27"><path d="M0.8 3.5 L11.5 1.8 V12.8 H0.8 Z M12.6 1.6 L27.2 -0.5 V12.8 H12.6 Z M0.8 13.8 H11.5 V24.8 L0.8 23.2 Z M12.6 13.8 H27.2 V27 L12.6 25 Z" fill="#fff"/></svg>
<svg class="a" style="left:56px;top:728px" width="45" height="40">
<defs><linearGradient id="ieg" x1="0" y1="0" x2="0" y2="1"><stop offset="0" stop-color="#6fd8fa"/><stop offset="1" stop-color="#1c86d4"/></linearGradient></defs>
<ellipse cx="25.5" cy="19.5" rx="19.5" ry="5.2" transform="rotate(-47 25.5 19.5)" fill="none" stroke="#f4c21c" stroke-width="2.2"/>
<path fill-rule="evenodd" d="M39.5 23.5 H19.8 Q20.8 29.5 26.8 29.5 Q31 29.5 33 26.8 H39.3 Q36.5 34.2 26.5 34.2 Q12.5 34.2 12.5 20.6 Q12.5 6.6 26.5 6.6 Q40.5 6.8 39.5 23.5 Z M20.2 17.8 H33 Q32 12.3 26.6 12.3 Q21.2 12.3 20.2 17.8 Z" fill="url(#ieg)" stroke="#1a6fb8" stroke-width="0.6"/>
<path d="M12.2 33.76 A19.5 5.2 -47 0 1 38.8 5.24" fill="none" stroke="#f4c21c" stroke-width="2.2"/>
</svg>
<svg class="a" style="left:126px;top:733px" width="34" height="33">
<path d="M2 3 H14 L15 5 H32 V28 H2 Z" fill="#f1d98c" stroke="#d9bf70" stroke-width="0.8"/>
<rect x="5" y="2" width="7" height="2.5" fill="#fff"/><rect x="5" y="2" width="2.5" height="2" fill="#2db52d"/>
<rect x="12" y="4.5" width="8" height="2.5" fill="#fff"/><rect x="12" y="4.5" width="2.5" height="2" fill="#d83a2a"/>
<rect x="20" y="6.5" width="8" height="2.5" fill="#fff"/><rect x="20" y="6.5" width="2.5" height="2" fill="#2a8ee0"/>
<rect x="2" y="10" width="30" height="18" fill="#f8e6a6"/>
<path d="M4 17 H30 V31 H25 V24 H10 V31 H4 Z" fill="#5fb3e8" stroke="#3a8cc8" stroke-width="0.8"/>
<rect x="10" y="19" width="15" height="3" fill="#a8dcf7"/>
</svg>
<svg class="a" style="left:188px;top:731px" width="34" height="34">
<path d="M20.5 2.6 A15.5 15.5 0 1 0 32.5 18 L32.5 15.5 L27 15.5 Q29 10 31.5 5 L32 1.5 L20.5 1.5 Z" fill="#fff"/>
<path d="M19.5 4.3 A13.6 13.6 0 1 0 30.6 17.2 L24.6 17.2 A7.6 7.6 0 1 1 16.5 9.6 L18.5 9.6 Z" fill="#5db55a"/>
<circle cx="17" cy="17.3" r="4" fill="#5db55a"/>
<path d="M19.6 4.5 L20.6 10.2" stroke="#f26a22" stroke-width="2.2" stroke-linecap="round"/>
<path d="M30 2.5 L22.5 11.5" stroke="#5db55a" stroke-width="3.2"/>
<path d="M29.6 9.8 L23.8 13.2" stroke="#f26a22" stroke-width="2.2" stroke-linecap="round"/>
</svg>
<div class="a" style="left:238px;top:729px;width:58px;height:39px;background:rgba(235,205,150,0.32);border:1px solid rgba(255,240,210,0.55)"></div>
<svg class="a" style="left:252px;top:733px" width="32" height="32">
<circle cx="15" cy="15" r="14" fill="#e33b2e"/>
<path d="M15 15 L27.1 8 A14 14 0 0 1 15 29 Z" fill="#f6cc1c"/>
<path d="M15 15 L15 29 A14 14 0 0 1 2.9 8 Z" fill="#4bb04a"/>
<path d="M15 9 H28.5 A14 14 0 0 1 17 28.9 L21 15 Z" fill="#f6cc1c"/>
<path d="M2.9 8 L9.5 19 L15 29 A14 14 0 0 1 2.9 8Z" fill="#4bb04a"/>
<circle cx="15" cy="15" r="6.2" fill="#fff"/><circle cx="15" cy="15" r="5" fill="#3d85d6"/>
<path d="M20 30 Q20 27 22 26 Q21 23 22 21 Q24 19.5 26 21 Q27 23 26 26 Q28 27 28 30 Z" fill="#fff" stroke="#9a9a9a" stroke-width="0.6"/>
</svg>
<svg class="a" style="left:313px;top:732px" width="32" height="32">
<defs><linearGradient id="ffb" x1="0.3" y1="0" x2="0.6" y2="1"><stop offset="0" stop-color="#5cc3f0"/><stop offset="0.5" stop-color="#1f6fc0"/><stop offset="1" stop-color="#122e78"/></linearGradient>
<linearGradient id="ffo" x1="1" y1="0.2" x2="0" y2="0.9"><stop offset="0" stop-color="#ffd52a"/><stop offset="0.35" stop-color="#f79224"/><stop offset="0.7" stop-color="#e8601c"/><stop offset="1" stop-color="#d23c1c"/></linearGradient></defs>
<circle cx="16" cy="16" r="15" fill="url(#ffo)"/>
<circle cx="17.5" cy="13.6" r="12" fill="url(#ffb)"/>
<path d="M24 3.5 Q30 7 29.8 15.5" fill="none" stroke="#fbd23a" stroke-width="2.4"/>
<path d="M27.5 18 Q26 26 18 29" fill="none" stroke="#f28a22" stroke-width="2.8"/>
<path d="M2.5 5 Q5 8 6 9.5 Q8.5 5.8 12.5 5 Q10.8 7.2 11.3 9.5 Q13.2 10 15.2 10.3 Q14.5 12.8 11.8 13.3 Q10.5 15.8 11.5 18 Q13.5 21 18 21.2 Q20.3 21.2 21.3 22.5 Q16.5 25.5 11 23.3 Q4 20.5 2 13.5 Q1.5 8.5 2.5 5 Z" fill="#ee7422"/>
</svg>
<div class="a" style="left:362px;top:729px;width:58px;height:39px;background:rgba(240,220,185,0.45);border:1.5px solid rgba(255,250,240,0.85)"></div>
<div class="a" style="left:375px;top:732px;width:32px;height:32px;background:#0b7fbd"></div>
<svg class="a" style="left:375px;top:732px" width="32" height="32">
<circle cx="15.8" cy="15.5" r="11.7" fill="#fff"/>
<circle cx="15.8" cy="15.5" r="5.7" fill="#0b80bd"/>
<path d="M12.2 1.8 L20.6 8.6 L12.2 15.4 Z" fill="#0b80bd"/>
<path d="M12.4 2.6 L19.4 8.6 L12.4 14.6 Z" fill="#fff"/>
<path d="M19.6 16.2 L11.2 22.9 L19.6 29.6 Z" fill="#0b80bd"/>
<path d="M19.4 17 L12.4 22.9 L19.4 28.8 Z" fill="#fff"/>
</svg>
<div class="a" style="left:424px;top:729px;width:58px;height:39px;background:rgba(235,205,150,0.3);border:1px solid rgba(255,240,210,0.5)"></div>
<svg class="a" style="left:437px;top:731px" width="34" height="34">
<defs><linearGradient id="mon" x1="0" y1="0" x2="1" y2="0.15"><stop offset="0" stop-color="#2a40e0"/><stop offset="0.2" stop-color="#1224d8"/><stop offset="0.45" stop-color="#0a1cc8"/><stop offset="0.48" stop-color="#c0d2fa"/><stop offset="1" stop-color="#6c90ec"/></linearGradient></defs>
<ellipse cx="15.5" cy="28.5" rx="8" ry="3.4" fill="#d6d9dd"/>
<path d="M2 1.8 L29 4.2 L28.2 21.8 L1 19.6 Z" fill="#e3e6ea" stroke="#b0b6bd" stroke-width="0.8"/>
<path d="M3.4 3.6 L27.5 5.8 L26.8 20.2 L2.7 18.2 Z" fill="url(#mon)"/>
<circle cx="24.3" cy="25" r="7.6" fill="#eef0f2" stroke="#8e969d" stroke-width="1.1"/>
<path d="M20.2 23.6 L22.8 25.9 L20.8 28.6 M28.4 21 L25.8 23.3 L27.8 26" fill="none" stroke="#24a024" stroke-width="1.9"/>
</svg>
<!-- tray -->
<svg class="a" style="left:1151px;top:739px" width="32" height="20"><rect x="1" y="1" width="29" height="17" rx="2" fill="none" stroke="#fff" stroke-width="1.6"/><path d="M5 5.5 H26 M5 9 H26 M9 13 H22" stroke="#fff" stroke-width="2.2" stroke-dasharray="2.2 1.2"/></svg>
<svg class="a" style="left:1194px;top:744px" width="12" height="8"><path d="M1 6 L6 1 L11 6 Z" fill="#fff"/></svg>
<svg class="a" style="left:1215px;top:739px" width="18" height="20"><path d="M2 4 V1 M6 4 V1 M1 4 H7 V10 H5 V18 H3 V10 H1 Z" fill="none" stroke="#fff" stroke-width="1.4"/><rect x="9" y="3" width="7" height="15" fill="none" stroke="#fff" stroke-width="1.5"/><rect x="11" y="1.5" width="3" height="2" fill="#fff"/></svg>
<svg class="a" style="left:1239px;top:739px" width="18" height="20"><rect x="5" y="3" width="12" height="10" fill="none" stroke="#fff" stroke-width="1.5"/><path d="M11 13 V16 M7 17 H15" stroke="#fff" stroke-width="1.5"/><circle cx="4" cy="5" r="2.8" fill="none" stroke="#fff" stroke-width="1.4"/><path d="M4 8 V18" stroke="#fff" stroke-width="1.4"/></svg>
<svg class="a" style="left:1263px;top:739px" width="20" height="20"><path d="M1 7 H4 L9 2 V18 L4 13 H1 Z" fill="none" stroke="#fff" stroke-width="1.4"/><path d="M12 7 Q14 10 12 13 M15 4 Q19 10 15 16" fill="none" stroke="#fff" stroke-width="1.4"/></svg>
<div class="t" style="left:1302px;top:735px;font-size:12px;color:#fff">3:57 PM</div>
<div class="t" style="left:1295px;top:751px;font-size:11.5px;color:#fff">12/22/2014</div>

</body></html>
